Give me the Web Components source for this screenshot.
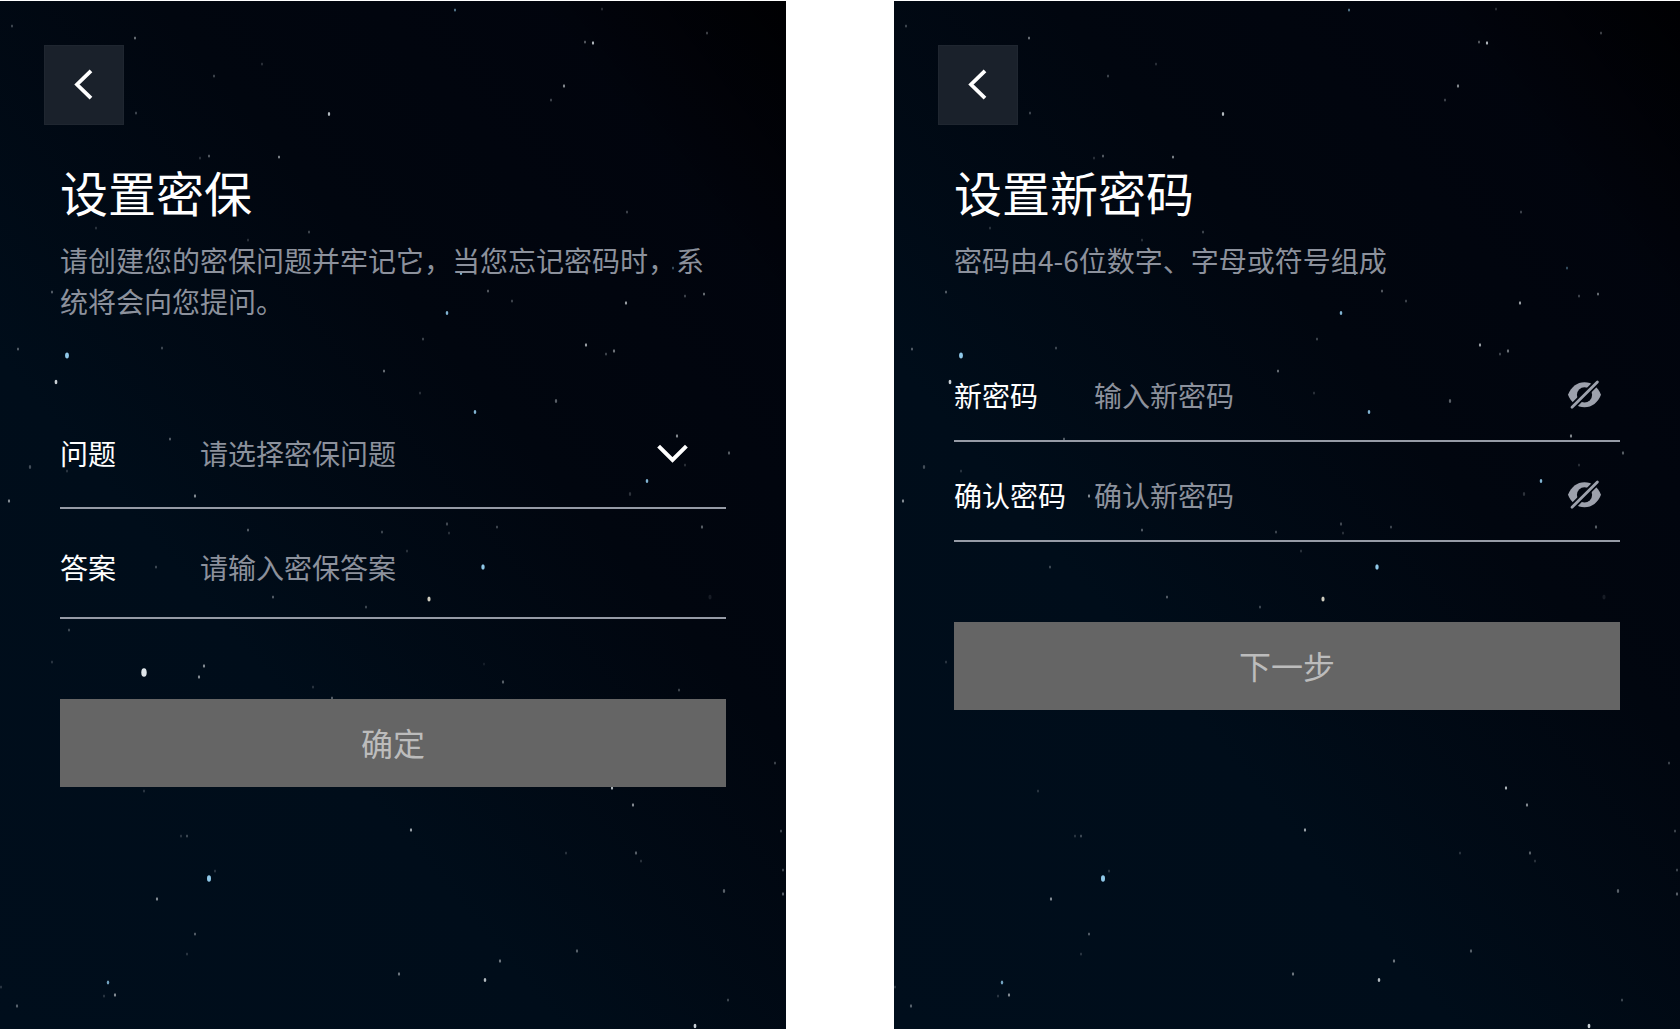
<!DOCTYPE html>
<html lang="zh-CN">
<head>
<meta charset="UTF-8">
<meta name="viewport" content="width=device-width, initial-scale=1">
<title>设置密保</title>
<style>
  body {
    margin: 0;
    background: #fff;
    font-family: "Noto Sans CJK SC", "Noto Sans", sans-serif;
  }

  .screens {
    display: grid;
    grid-template-columns: 1fr 1fr;
    column-gap: 108px;
    min-height: 100vh;
    padding-top: 1px;
    box-sizing: border-box;
  }
</style>
</head>
<body>
<main class="screens">
  <auth-screen style="--form-offset: 79px">
    <span slot="title">设置密保</span>
    <span slot="description">请创建您的密保问题并牢记它，当您忘记密码时，系统将会向您提问。</span>
    <select-field label="问题" placeholder="请选择密保问题"></select-field>
    <text-field label="答案" placeholder="请输入密保答案"></text-field>
    <submit-button slot="action">确定</submit-button>
  </auth-screen>

  <auth-screen style="--form-offset: 71px">
    <span slot="title">设置新密码</span>
    <span slot="description">密码由4-6位数字、字母或符号组成</span>
    <password-field label="新密码" placeholder="输入新密码"></password-field>
    <password-field label="确认密码" placeholder="确认新密码"></password-field>
    <submit-button slot="action">下一步</submit-button>
  </auth-screen>
</main>

<script>
  // x, y, size, opacity, colour
  const WHITE = '#dfe6ea';
  const BLUE = '#8fc8e8';
  const WARM = '#e6e2d2';
  const STARS = [
    [12, 25, 1, 0.3], [135, 37, 1, 0.5], [262, 63, 1, 0.2], [214, 75, 1, 0.3], [136, 112, 1, 0.3],
    [329, 113, 1.2, 0.8], [279, 156, 1, 0.6], [209, 155, 1, 0.4], [200, 157, 1, 0.2], [96, 227, 1, 0.2],
    [309, 231, 1, 0.3], [248, 239, 1, 0.2], [52, 291, 1, 0.4], [455, 9, 1, 0.6, BLUE], [602, 8, 1, 0.2],
    [585, 41, 1, 0.4], [593, 42, 1.1, 0.8], [707, 32, 1, 0.3], [564, 85, 1.1, 0.6], [551, 99, 1, 0.3],
    [627, 211, 1, 0.3], [461, 272, 1.2, 0.9, BLUE], [673, 267, 1, 0.4, BLUE], [488, 290, 1, 0.4],
    [512, 300, 1, 0.3], [447, 312, 1.3, 0.9, BLUE], [626, 302, 1.1, 0.7], [685, 295, 1, 0.3],
    [704, 293, 1, 0.5], [423, 338, 1, 0.3], [18, 348, 1, 0.4], [67, 354.5, 1.9, 1, BLUE],
    [56, 381, 1.4, 0.9], [162, 347, 1, 0.3], [384, 370, 1, 0.5], [170, 438, 1, 0.4], [30, 466, 1.2, 0.3],
    [67, 470, 1, 0.2], [9, 500, 1.1, 0.6], [195, 495, 1.1, 0.6], [248, 529, 1, 0.4], [382, 531, 1, 0.3],
    [407, 550, 1, 0.2], [156, 566, 1, 0.3], [273, 596, 1, 0.4], [366, 606, 1, 0.3], [69, 629, 1, 0.3],
    [52, 661, 1, 0.2], [144, 671.5, 2.7, 1], [204, 665, 1.1, 0.6], [199, 676, 1.1, 0.6],
    [586, 344, 1.1, 0.7], [606, 353, 1, 0.3], [614, 350, 1.1, 0.5], [420, 392, 1, 0.2], [556, 400, 1.2, 0.4],
    [475, 411, 1.3, 0.9, BLUE], [677, 435, 1.1, 0.6], [729, 452, 1.1, 0.4], [685, 464, 1, 0.2],
    [647, 480, 1.3, 0.9, BLUE], [630, 493, 1.2, 0.2], [447, 523, 1.1, 0.3], [449, 532, 1, 0.2],
    [497, 526, 1, 0.3], [702, 526, 1.1, 0.4], [483, 566, 1.7, 1, BLUE], [429, 598, 1.6, 0.9, WARM],
    [710, 596, 1.6, 0.1], [484, 663, 1, 0.1], [332, 697, 1, 0.4], [313, 686, 1, 0.2], [144, 790, 1, 0.2],
    [181, 835, 1, 0.2], [187, 835, 1, 0.3], [411, 829, 1.1, 0.7], [209, 877.5, 2, 1, BLUE],
    [215, 870, 1, 0.2], [157, 898, 1.1, 0.6], [195, 933, 1, 0.4], [187, 953, 1, 0.2], [399, 973, 1.1, 0.5],
    [108, 981.5, 1.2, 0.8, BLUE], [115, 994, 1.1, 0.6], [104, 995, 1, 0.2], [17, 1005, 1.1, 0.4],
    [1, 986, 1, 0.2], [503, 681, 1.1, 0.4], [679, 689, 1, 0.3], [612, 787, 1.1, 0.8], [633, 804, 1.1, 0.6],
    [775, 762, 1, 0.3], [781, 830, 1, 0.3], [566, 852, 1, 0.2], [636, 852, 1.1, 0.4], [641, 860, 1, 0.2],
    [724, 890, 1.2, 0.4], [783, 869, 1, 0.3], [783, 893, 1.1, 0.4], [577, 950, 1.1, 0.4],
    [500, 960, 1.1, 0.5], [485, 979, 1.3, 0.8], [728, 999, 1, 0.3], [695, 1025, 1.4, 0.9],
  ];

  class StarField extends HTMLElement {
    shadowRoot = this.attachShadow({ mode: 'open' });

    connectedCallback() {
      const stars = STARS.map(([x, y, size, opacity, color = WHITE]) =>
        `<ellipse cx="${x}" cy="${y}" rx="${size}" ry="${size * 1.6}" fill="${color}" opacity="${opacity}"/>`
      ).join('');

      this.shadowRoot.innerHTML = `
        <style>
          :host {
            display: block;
            overflow: hidden;
            background:
              linear-gradient(to bottom left, #000002 0%, rgba(0, 0, 2, 0) 16%),
              linear-gradient(50deg, #000e1c 0%, #000d1a 34%, #01060f 62%, #01030c 100%);
          }

          svg {
            position: absolute;
            inset: 0;
            width: 100%;
            height: 100%;
          }
        </style>
        <svg viewBox="0 0 786 1028" preserveAspectRatio="xMidYMid slice" aria-hidden="true">${stars}</svg>
      `;
    }
  }

  class BackButton extends HTMLElement {
    shadowRoot = this.attachShadow({ mode: 'open' });

    connectedCallback() {
      this.shadowRoot.innerHTML = `
        <style>
          :host {
            display: block;
          }

          button {
            display: flex;
            align-items: center;
            justify-content: center;
            width: 80px;
            height: 80px;
            padding: 0;
            border: 1px solid #1f2630;
            background: #1a212b;
            cursor: pointer;
          }
        </style>
        <button type="button" aria-label="返回">
          <svg width="32" height="32" viewBox="0 0 32 32" fill="none" stroke="#fff" stroke-width="3.8">
            <path d="M23 1.8 L9 15.5 L23 29.2"/>
          </svg>
        </button>
      `;
    }
  }

  class AuthScreen extends HTMLElement {
    shadowRoot = this.attachShadow({ mode: 'open' });

    connectedCallback() {
      this.shadowRoot.innerHTML = `
        <style>
          :host {
            display: block;
            position: relative;
            color: #fff;
          }

          star-field {
            position: absolute;
            inset: 0;
          }

          .content {
            position: relative;
            padding: 44px 60px;
          }

          back-button {
            margin-left: -16px;
          }

          h1 {
            margin: 32px 0 15px;
            font-size: 48px;
            font-weight: 400;
            line-height: 68px;
          }

          p {
            margin: 0;
            color: #8c919c;
            font-size: 28px;
            line-height: 41px;
          }

          form {
            display: flex;
            flex-direction: column;
            margin-top: var(--form-offset);
          }

          .fields {
            display: flex;
            flex-direction: column;
            gap: 10px;
            margin-bottom: 80px;
          }
        </style>
        <star-field></star-field>
        <div class="content">
          <back-button></back-button>
          <h1><slot name="title"></slot></h1>
          <p><slot name="description"></slot></p>
          <form>
            <div class="fields"><slot></slot></div>
            <slot name="action"></slot>
          </form>
        </div>
      `;
    }
  }

  // Base for the underlined rows: label on the left, control on the right
  class FormField extends HTMLElement {
    shadowRoot = this.attachShadow({ mode: 'open' });

    height = 100;

    connectedCallback() {
      this.label = this.getAttribute('label');
      this.placeholder = this.getAttribute('placeholder');
      this.shadowRoot.innerHTML = `
        ${this.getStyles()}
        <label for="control">${this.label}</label>
        ${this.getControl()}
      `;
    }

    getStyles() {
      return `
        <style>
          :host {
            display: grid;
            grid-template-columns: 140px 1fr auto;
            align-items: center;
            height: ${this.height}px;
            padding-bottom: 2px;
            box-sizing: border-box;
            border-bottom: 2px solid #969ba6;
            font-size: 28px;
            line-height: 40px;
          }

          input, select {
            width: 100%;
            height: 40px;
            margin: 0;
            padding: 0;
            border: 0;
            outline: 0;
            appearance: none;
            background: transparent;
            color: #fff;
            font: inherit;
          }

          input::placeholder {
            color: #8c919c;
            opacity: 1;
          }

          select {
            grid-area: 1 / 2 / 2 / 4;
            color: #8c919c;
          }

          .chevron {
            grid-area: 1 / 3;
            margin-right: 38px;
            pointer-events: none;
          }

          button {
            display: flex;
            margin-right: 17px;
            padding: 0;
            border: 0;
            background: none;
            color: #9da1ac;
            cursor: pointer;
          }
        </style>
      `;
    }
  }

  class TextField extends FormField {
    getControl() {
      return `<input id="control" type="text" placeholder="${this.placeholder}">`;
    }
  }

  class SelectField extends FormField {
    height = 108;

    getControl() {
      return `
        <select id="control">
          <option value="">${this.placeholder}</option>
        </select>
        <svg class="chevron" width="32" height="20" viewBox="0 0 32 20" fill="none" stroke="#fff" stroke-width="4">
          <path d="M2.6 3.2 L16.5 17 L30.4 3.2"/>
        </svg>
      `;
    }
  }

  class PasswordField extends FormField {
    height = 90;

    getControl() {
      return `
        <input id="control" type="password" placeholder="${this.placeholder}">
        <button type="button" aria-label="显示密码">
          <svg width="36" height="32" viewBox="0 -1 36 32">
            <mask id="cut">
              <rect width="36" height="32" fill="#fff"/>
              <circle cx="17.5" cy="14.8" r="7.6" fill="#000"/>
              <path d="M1 31.3 L34 -1.7" stroke="#000" stroke-width="6.4"/>
            </mask>
            <path mask="url(#cut)" fill="currentColor"
              d="M1 14.7 C4 7 10 2.2 17.5 2.2 C25 2.2 31 7 34 14.7 C31 22.4 25 27.2 17.5 27.2 C10 27.2 4 22.4 1 14.7 Z"/>
            <path d="M5 27.3 L30.4 1.9" stroke="currentColor" stroke-width="2.8" stroke-linecap="round"/>
          </svg>
        </button>
      `;
    }

    connectedCallback() {
      super.connectedCallback();
      const input = this.shadowRoot.querySelector('input');
      this.shadowRoot.querySelector('button').addEventListener('click', () => {
        input.type = input.type === 'password' ? 'text' : 'password';
      });
    }
  }

  class SubmitButton extends HTMLElement {
    shadowRoot = this.attachShadow({ mode: 'open' });

    connectedCallback() {
      this.shadowRoot.innerHTML = `
        <style>
          :host {
            display: block;
          }

          button {
            width: 100%;
            height: 88px;
            padding: 0 0 2px;
            border: 0;
            background: #656565;
            color: #bcbcbc;
            font: inherit;
            font-size: 32px;
            line-height: 48px;
            cursor: pointer;
          }
        </style>
        <button type="button"><slot></slot></button>
      `;
    }
  }

  customElements.define('star-field', StarField);
  customElements.define('back-button', BackButton);
  customElements.define('text-field', TextField);
  customElements.define('select-field', SelectField);
  customElements.define('password-field', PasswordField);
  customElements.define('submit-button', SubmitButton);
  customElements.define('auth-screen', AuthScreen);
</script>
</body>
</html>
